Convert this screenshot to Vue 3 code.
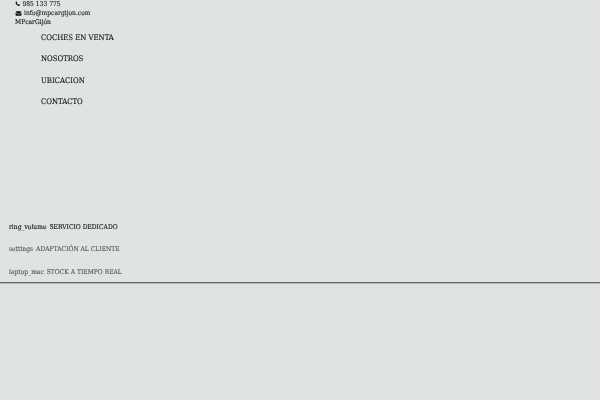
<script setup>
const navItems = ['COCHES EN VENTA', 'NOSOTROS', 'UBICACION', 'CONTACTO'];

const features = [
  { icon: 'ring_volume', label: 'SERVICIO DEDICADO', active: true },
  { icon: 'settings', label: 'ADAPTACIÓN AL CLIENTE', active: false },
  { icon: 'laptop_mac', label: 'STOCK A TIEMPO REAL', active: false }
];
</script>

<template>
  <div class="page">
    <header class="top">
      <div class="contact">
        <svg class="icon" viewBox="0 0 24 24"><path d="M6.6 2.5 3.2 4.2C2.6 4.6 2.4 5.3 2.500 6c1 8 7.500 14.500 15.500 15.500.7.100 1.400-.100 1.800-.7l1.700-3.400c.3-.6.100-1.300-.5-1.600l-4-2c-.5-.3-1.200-.1-1.500.3l-1.500 1.800c-2.700-1.300-4.900-3.500-6.200-6.200l1.800-1.500c.4-.3.600-1 .3-1.500l-2-4c-.3-.6-1-.8-1.500-.5Z" /></svg>
        <span>985 133 775</span>
      </div>
      <div class="contact">
        <svg class="icon mail" viewBox="0 0 24 24"><path d="M2 6.500C2 5.100 3.100 4 4.500 4h15C20.900 4 22 5.100 22 6.500v.6l-10 6.200L2 7.100v-.6Zm0 3v8C2 18.900 3.100 20 4.500 20h15c1.400 0 2.500-1.100 2.500-2.500v-8l-10 6.200L2 9.500Z" /></svg>
        <span>info@mpcargijon.com</span>
      </div>
      <div class="brand">MPcarGijón</div>
    </header>

    <nav class="nav">
      <a v-for="item in navItems" :key="item" class="nav-link">{{ item }}</a>
    </nav>

    <section class="features">
      <div
        v-for="f in features"
        :key="f.icon"
        :class="['feature', { active: f.active }]"
      >
        <span>{{ f.icon }}</span>
        <span>{{ f.label }}</span>
      </div>
    </section>
  </div>
</template>

<style>
html,
body {
  margin: 0;
  background: #dfe3e3;
}
</style>

<style scoped>
.page {
  width: 600px;
  height: 400px;
  overflow: hidden;
  font-family: "DejaVu Serif Condensed", "DejaVu Serif", serif;
  text-rendering: geometricPrecision;
  -webkit-text-stroke: 0.1px currentColor;
  color: #111;
  filter: blur(0.25px);
}

.top {
  padding-left: 15px;
  font-size: 6.67px;
  line-height: 8px;
}

.contact {
  display: flex;
  align-items: center;
  gap: 2px;
  height: 8px;
  color: #222;
}

.contact + .contact {
  margin-top: 1px;
}

.icon {
  width: 5.5px;
  height: 5.5px;
  fill: #111;
  flex: none;
}

.mail {
  width: 7px;
  height: 7px;
}

.brand {
  height: 8px;
  margin-top: 0.5px;
}

.nav {
  display: flex;
  flex-direction: column;
  gap: 13.5px;
  padding: 8px 0 0 41px;
  font-size: 7.7px;
  line-height: 8px;
}

.nav-link {
  color: #111;
}

.features {
  margin-top: 116.5px;
  height: 59px;
  border-bottom: 1px solid #666;
  box-shadow: 0 1px 0 #b4b8b8;
  font-size: 6.67px;
  line-height: 8px;
  padding-left: 9px;
}

.feature {
  display: flex;
  gap: 3px;
  height: 22.5px;
  color: #555;
}

.feature.active {
  color: #111;
}
</style>
